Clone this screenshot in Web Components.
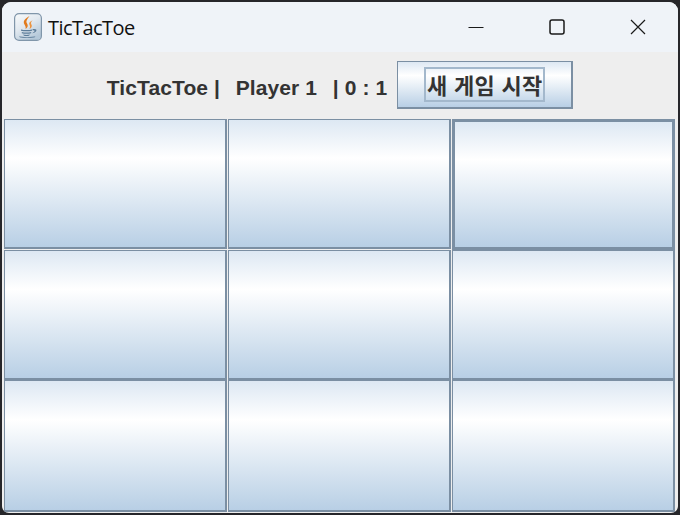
<!DOCTYPE html>
<html lang="ko">
<head>
<meta charset="utf-8">
<title>TicTacToe</title>
<style>
  html, body { margin: 0; height: 100%; background: #26262a; overflow: hidden; }
</style>
</head>
<body>
<java-frame title-text="TicTacToe">
  <game-toolbar status="TicTacToe |  Player 1  | 0 : 1">
    <metal-button focused>새 게임 시작</metal-button>
  </game-toolbar>
  <game-board focus-cell="2"></game-board>
</java-frame>

<script>
class JavaFrame extends HTMLElement {
  constructor() {
    super();
    this.attachShadow({ mode: "open" });
  }

  connectedCallback() {
    const title = this.getAttribute("title-text") || "";
    this.shadowRoot.innerHTML = `
      <style>
        :host { display: flex; flex-direction: column; width: 676px; height: 511px; margin: 2px 0 0 2px;
                background: #eeeeee; border-radius: 9px 9px 7px 7px; overflow: hidden; }
        .bar { display: flex; align-items: center; height: 50px; flex: none; background: #eff3f8; padding-left: 12px; }
        svg.app { width: 28px; height: 28px; flex: none; margin-right: 6px; }
        .name { flex: 1; font: 20px "Open Sans", "Noto Sans", sans-serif; letter-spacing: -0.55px; color: #111; }
        .ctl { width: 81px; height: 50px; display: flex; align-items: center; justify-content: center; }
        .ctl svg { width: 16px; height: 16px; fill: none; stroke: #1a1a1a; stroke-width: 1.2; }
        .controls { display: flex; }
      </style>
      <div class="bar">
        <svg class="app" viewBox="0 0 28 28">
          <defs>
            <linearGradient id="tile" x1="0" y1="0" x2="0.6" y2="1">
              <stop offset="0" stop-color="#f8fafb"/><stop offset="0.5" stop-color="#e2e9f0"/><stop offset="1" stop-color="#b4c8d9"/>
            </linearGradient>
          </defs>
          <rect x="0.6" y="0.6" width="26.8" height="26.8" rx="4.5" fill="url(#tile)" stroke="#8096aa" stroke-width="1.2"/>
          <path d="M15.5 3C11 6 8.500 8 10.500 11.500C11.500 13 12 14.500 11.500 16C14.500 14 14 11.800 12.800 10C11.800 8.300 13 6.500 15.500 3Z" fill="#e27b1e"/>
          <path d="M19 7C15.800 8.500 14.500 10 15.500 11.800C16.200 13 16.200 14.500 15.500 16C18 14.500 18.300 12.800 17.300 11.200C16.500 9.800 17.300 8.500 19 7Z" fill="#ec9440"/>
          <path d="M7 16.500C10 17.300 15 17.300 18 16.500V17.700C15 18.500 10 18.500 7 17.700Z" fill="#5d7d9a"/>
          <path d="M7.800 19C10.500 19.700 14.500 19.700 17.200 19V20.200C14.500 20.900 10.500 20.900 7.800 20.200Z" fill="#5d7d9a"/>
          <path d="M18.500 16.300C21.500 15.500 23 16.600 22.300 18C21.700 19.200 20 19.900 18.200 20.300L19.800 18.900C21 18.300 21 17 18.500 17.300Z" fill="#5d7d9a"/>
          <path d="M9 21.500C11 22 14 22 16 21.500L15 22.700C13.500 23 11.500 23 10 22.700Z" fill="#5d7d9a"/>
          <path d="M5 23.300C9 24.400 17 24.400 21.500 23.300L20.500 24.500C16 25.300 10 25.300 6 24.500Z" fill="#6f8ca6"/>
        </svg>
        <span class="name">${title}</span>
        <div class="controls">
          <div class="ctl"><svg viewBox="0 0 16 16"><path d="M0.500 8.500H15.500"/></svg></div>
          <div class="ctl"><svg viewBox="0 0 16 16"><rect x="1" y="1" width="14" height="14" rx="2" stroke-width="1.500"/></svg></div>
          <div class="ctl"><svg viewBox="0 0 16 16"><path d="M1 1L15 15M15 1L1 15"/></svg></div>
        </div>
      </div>
      <slot></slot>`;
  }
}

class GameToolbar extends HTMLElement {
  static get observedAttributes() { return ["status"]; }

  constructor() {
    super();
    this.attachShadow({ mode: "open" });
  }

  connectedCallback() {
    this._render();
  }

  attributeChangedCallback() {
    this._render();
  }

  _render() {
    // the two-space separators in the status are a bit wider than plain spaces
    const parts = (this.getAttribute("status") || "").split("  ");
    const status = parts.join(`<span class="gap">  </span>`);
    this.shadowRoot.innerHTML = `
      <style>
        :host { display: flex; align-items: center; justify-content: center; gap: 10px; height: 66px; flex: none; box-sizing: border-box; padding-bottom: 1px; }
        .status { font: bold 21px "Liberation Sans", Arial, sans-serif; letter-spacing: 0.12px; color: #333333; white-space: pre; padding-top: 7px; }
        .gap { word-spacing: 1.8px; }
      </style>
      <span class="status">${status}</span>
      <slot></slot>`;
  }
}

class MetalButton extends HTMLElement {
  constructor() {
    super();
    this.attachShadow({ mode: "open" });
  }

  connectedCallback() {
    this.shadowRoot.innerHTML = `
      <style>
        :host { display: flex; align-items: center; justify-content: center; box-sizing: border-box; width: 176px; height: 48px;
                border: 1px solid #7b8fa3; border-right-width: 2px; border-bottom-width: 2px;
                background: linear-gradient(#dde8f3 0%, #ffffff 30%, #b8cfe5 100%); }
        .label { box-sizing: border-box; height: 35px; display: flex; align-items: center; justify-content: center; width: 121px;
                 border: 2px solid #a3b8cc; font: bold 22px "Noto Sans CJK KR", "Liberation Sans", sans-serif; letter-spacing: 0.3px; color: #333333; white-space: nowrap; }
      </style>
      <span class="label"><slot></slot></span>`;
  }
}

class BoardCell extends HTMLElement {
  constructor() {
    super();
    this.attachShadow({ mode: "open" });
  }

  connectedCallback() {
    const focused = this.hasAttribute("focused");
    this.shadowRoot.innerHTML = `
      <style>
        :host { display: block; box-sizing: border-box; border: solid #7b8fa3; border-width: ${focused ? "3px" : "1px 2px 2px 1px"};
                background: linear-gradient(#dde8f3 0%, #ffffff 30%, #b8cfe5 100%); }
      </style>`;
  }
}

class GameBoard extends HTMLElement {
  constructor() {
    super();
    this.attachShadow({ mode: "open" });
  }

  connectedCallback() {
    const focus = this.getAttribute("focus-cell");
    let cells = "";
    for (let i = 0; i < 9; i++) {
      cells += `<board-cell${String(i) === focus ? " focused" : ""}></board-cell>`;
    }
    this.shadowRoot.innerHTML = `
      <style>
        :host { display: grid; grid-template-columns: repeat(3, 223px); grid-template-rows: 131px 130px 132px; column-gap: 1px; margin: 1px 3px 0 2px; }
        board-cell:nth-child(-n+3) { margin-bottom: 1px; }
      </style>
      ${cells}`;
  }
}

customElements.define("java-frame", JavaFrame);
customElements.define("game-toolbar", GameToolbar);
customElements.define("metal-button", MetalButton);
customElements.define("board-cell", BoardCell);
customElements.define("game-board", GameBoard);
</script>
</body>
</html>
